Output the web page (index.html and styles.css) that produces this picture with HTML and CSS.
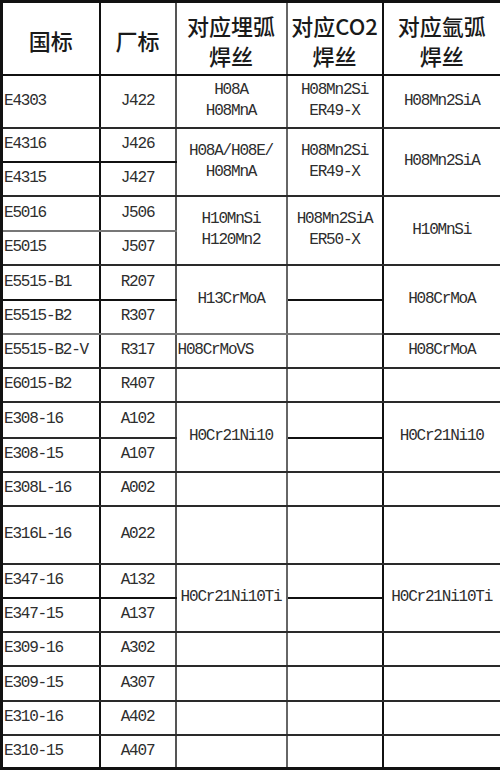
FILE: index.html
```html
<!DOCTYPE html>
<html lang="zh">
<head>
<meta charset="utf-8">
<link rel="stylesheet" href="styles.css">
</head>
<body>
<table class="grid">
  <colgroup>
    <col class="c-gb"><col class="c-cb"><col class="c-mh"><col class="c-co"><col class="c-ar">
  </colgroup>
  <thead>
    <tr class="h-head">
      <th class="b-v1">国标</th>
      <th class="b-v2">厂标</th>
      <th class="b-v3">对应埋弧<br>焊丝</th>
      <th class="b-v4">对应CO2<br>焊丝</th>
      <th>对应氩弧<br>焊丝</th>
    </tr>
  </thead>
  <tbody>
    <tr class="h-53">
      <td class="gb b-v1">E4303</td><td class="b-v2">J422</td>
      <td class="b-v3">H08A<br>H08MnA</td>
      <td class="b-v4">H08Mn2Si<br>ER49-X</td>
      <td>H08Mn2SiA</td>
    </tr>
    <tr class="h-34">
      <td class="gb b-v1 b-dark">E4316</td><td class="b-v2 b-dark">J426</td>
      <td class="b-v3" rowspan="2">H08A/H08E/<br>H08MnA</td>
      <td class="b-v4" rowspan="2">H08Mn2Si<br>ER49-X</td>
      <td rowspan="2">H08Mn2SiA</td>
    </tr>
    <tr class="h-34">
      <td class="gb b-v1">E4315</td><td class="b-v2">J427</td>
    </tr>
    <tr class="h-35">
      <td class="gb b-v1 b-gray">E5016</td><td class="b-v2 b-gray">J506</td>
      <td class="b-v3" rowspan="2">H10MnSi<br>H120Mn2</td>
      <td class="b-v4" rowspan="2">H08Mn2SiA<br>ER50-X</td>
      <td rowspan="2">H10MnSi</td>
    </tr>
    <tr class="h-34">
      <td class="gb b-v1">E5015</td><td class="b-v2">J507</td>
    </tr>
    <tr class="h-35">
      <td class="gb b-v1 b-dark">E5515-B1</td><td class="b-v2 b-dark">R207</td>
      <td class="b-v3 b-gray" rowspan="2">H13CrMoA</td>
      <td class="b-v4 b-dark"></td>
      <td rowspan="2">H08CrMoA</td>
    </tr>
    <tr class="h-34">
      <td class="gb b-v1 b-gray">E5515-B2</td><td class="b-v2 b-gray">R307</td>
      <td class="b-v4 b-gray"></td>
    </tr>
    <tr class="h-34">
      <td class="gb b-v1">E5515-B2-V</td><td class="b-v2">R317</td>
      <td class="b-v3 left">H08CrMoVS</td>
      <td class="b-v4"></td>
      <td>H08CrMoA</td>
    </tr>
    <tr class="h-34">
      <td class="gb b-v1">E6015-B2</td><td class="b-v2">R407</td>
      <td class="b-v3"></td><td class="b-v4"></td><td></td>
    </tr>
    <tr class="h-36">
      <td class="gb b-v1">E308-16</td><td class="b-v2">A102</td>
      <td class="b-v3" rowspan="2">H0Cr21Ni10</td>
      <td class="b-v4 b-dark"></td>
      <td rowspan="2">H0Cr21Ni10</td>
    </tr>
    <tr class="h-34">
      <td class="gb b-v1">E308-15</td><td class="b-v2">A107</td>
      <td class="b-v4"></td>
    </tr>
    <tr class="h-34">
      <td class="gb b-v1">E308L-16</td><td class="b-v2">A002</td>
      <td class="b-v3"></td><td class="b-v4"></td><td></td>
    </tr>
    <tr class="h-58">
      <td class="gb b-v1">E316L-16</td><td class="b-v2">A022</td>
      <td class="b-v3"></td><td class="b-v4"></td><td></td>
    </tr>
    <tr class="h-34">
      <td class="gb b-v1 b-dark">E347-16</td><td class="b-v2 b-dark">A132</td>
      <td class="b-v3" rowspan="2">H0Cr21Ni10Ti</td>
      <td class="b-v4 b-dark"></td>
      <td rowspan="2">H0Cr21Ni10Ti</td>
    </tr>
    <tr class="h-34">
      <td class="gb b-v1">E347-15</td><td class="b-v2">A137</td>
      <td class="b-v4"></td>
    </tr>
    <tr class="h-34">
      <td class="gb b-v1">E309-16</td><td class="b-v2">A302</td>
      <td class="b-v3"></td><td class="b-v4"></td><td></td>
    </tr>
    <tr class="h-35">
      <td class="gb b-v1">E309-15</td><td class="b-v2">A307</td>
      <td class="b-v3"></td><td class="b-v4"></td><td></td>
    </tr>
    <tr class="h-34">
      <td class="gb b-v1">E310-16</td><td class="b-v2">A402</td>
      <td class="b-v3"></td><td class="b-v4"></td><td></td>
    </tr>
    <tr class="h-34">
      <td class="gb b-v1">E310-15</td><td class="b-v2">A407</td>
      <td class="b-v3"></td><td class="b-v4"></td><td></td>
    </tr>
  </tbody>
</table>
</body>
</html>
```
FILE: styles.css
```css
html, body {
  margin: 0;
  padding: 0;
  background: #ffffff;
}

.grid {
  width: 500px;
  table-layout: fixed;
  border-collapse: collapse;
  border: 3px solid #111;
  font-family: "Liberation Mono", "Noto Sans CJK SC", monospace;
  font-size: 16px;
  letter-spacing: -1.2px;
  color: #2e2e2e;
}

.c-gb { width: 98px; }
.c-cb { width: 76px; }
.c-mh { width: 111px; }
.c-co { width: 96px; }
.c-ar { width: 119px; }

.grid th,
.grid td {
  padding: 0;
  text-align: center;
  vertical-align: middle;
  line-height: 21px;
  border-top: 2px solid #2a2a2a;
  border-bottom: 2px solid #2a2a2a;
  white-space: nowrap;
  overflow: visible;
}

.grid th {
  font-family: "Noto Sans CJK SC", sans-serif;
  font-weight: 500;
  font-size: 22px;
  letter-spacing: 0;
  line-height: 30px;
  color: #1a1a1a;
  padding-top: 4px;
  border-bottom: 2px solid #111;
}

.b-v1 { border-right: 2px solid #111; }
.b-v2 { border-right: 2px solid #555; }
.b-v3 { border-right: 2px solid #666; }
.b-v4 { border-right: 2px solid #111; }

.grid td.gb {
  text-align: left;
  padding-left: 1px;
}

.grid td.left {
  text-align: left;
  padding-left: 1px;
}

.grid td.b-dark { border-bottom: 2px solid #111; }
.grid td.b-gray { border-bottom: 2px solid #777; }

.h-head { height: 73px; }
.h-53 { height: 53px; }
.h-34 { height: 34px; }
.h-35 { height: 35px; }
.h-36 { height: 36px; }
.h-58 { height: 58px; }
```
